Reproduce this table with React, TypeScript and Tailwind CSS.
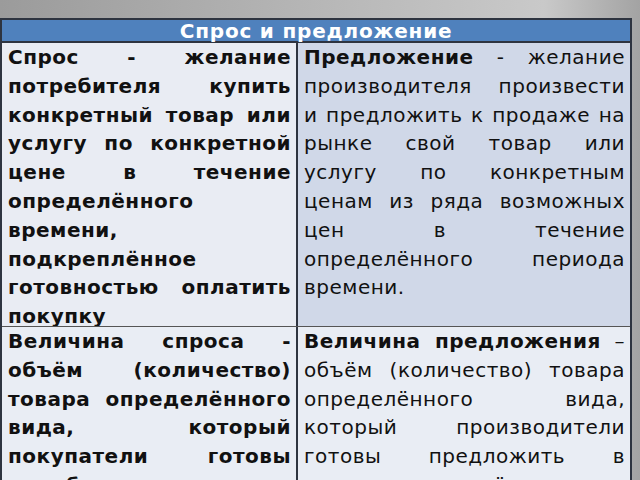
import React from 'react'

type Part = { t: string; b?: boolean }
type Line = Part[] | string

function Cell({ lines, bold, className }: { lines: Line[]; bold?: boolean; className: string }) {
  return (
    <div className={`pl-[6px] pr-[5px] text-[20px] leading-[28.8px] tracking-[0.5px] text-[#111] ${bold ? 'font-bold' : 'font-normal'} ${className}`}>
      {lines.map((ln, i) => {
        const last = i === lines.length - 1
        return (
          <div
            key={i}
            className={`whitespace-nowrap text-justify ${last ? '' : '[text-align-last:justify]'}`}
          >
            {typeof ln === 'string'
              ? ln
              : ln.map((p, j) => (
                  <span key={j} className={p.b ? 'font-bold' : ''}>
                    {p.t}
                  </span>
                ))}
          </div>
        )
      })}
    </div>
  )
}

export default function App() {
  return (
    <div
      className="w-[640px] h-[480px] overflow-hidden bg-[linear-gradient(90deg,#9b9b9b_0%,#b4b4b4_45%,#c9c9c9_85%,#a3a3a3_100%)] font-['DejaVu_Sans',sans-serif]"
    >
      <div className="h-[18px]" />
      <div className="w-[632px] border-2 border-[#2e3440] border-b-0 bg-[#e9edf4]">
        <div className="h-[23px] bg-[#4f81bd] border-b-2 border-[#2e3440] flex items-center justify-center text-white font-bold text-[20px] tracking-[0.8px] leading-none">
          Спрос и предложение
        </div>
        <div className="grid grid-cols-[296px_1fr] h-[283px]">
          <Cell
            bold
            className="bg-[#e9ecf3] border-r-2 border-[#2e3440] overflow-hidden"
            lines={[
              'Спрос - желание',
              'потребителя купить',
              'конкретный товар или',
              'услугу по конкретной',
              'цене в течение',
              'определённого',
              'времени,',
              'подкреплённое',
              'готовностью оплатить',
              'покупку',
            ]}
          />
          <Cell
            className="bg-[#d0d8e8]"
            lines={[
              [{ t: 'Предложение', b: true }, { t: ' - желание' }],
              'производителя произвести',
              'и предложить к продаже на',
              'рынке свой товар или',
              'услугу по конкретным',
              'ценам из ряда возможных',
              'цен в течение',
              'определённого периода',
              'времени.',
            ]}
          />
        </div>
        <div className="grid grid-cols-[296px_1fr] h-[160px] border-t border-[#555]">
          <Cell
            bold
            className="bg-[#e9edf4] border-r-2 border-[#2e3440]"
            lines={[
              'Величина спроса -',
              'объём (количество)',
              'товара определённого',
              'вида, который',
              'покупатели готовы',
              'приобрести в течение',
            ]}
          />
          <Cell
            className="bg-[#e9edf4]"
            lines={[
              [{ t: 'Величина предложения', b: true }, { t: ' –' }],
              'объём (количество) товара',
              'определённого вида,',
              'который производители',
              'готовы предложить в',
              'течение определённого',
            ]}
          />
        </div>
      </div>
    </div>
  )
}
